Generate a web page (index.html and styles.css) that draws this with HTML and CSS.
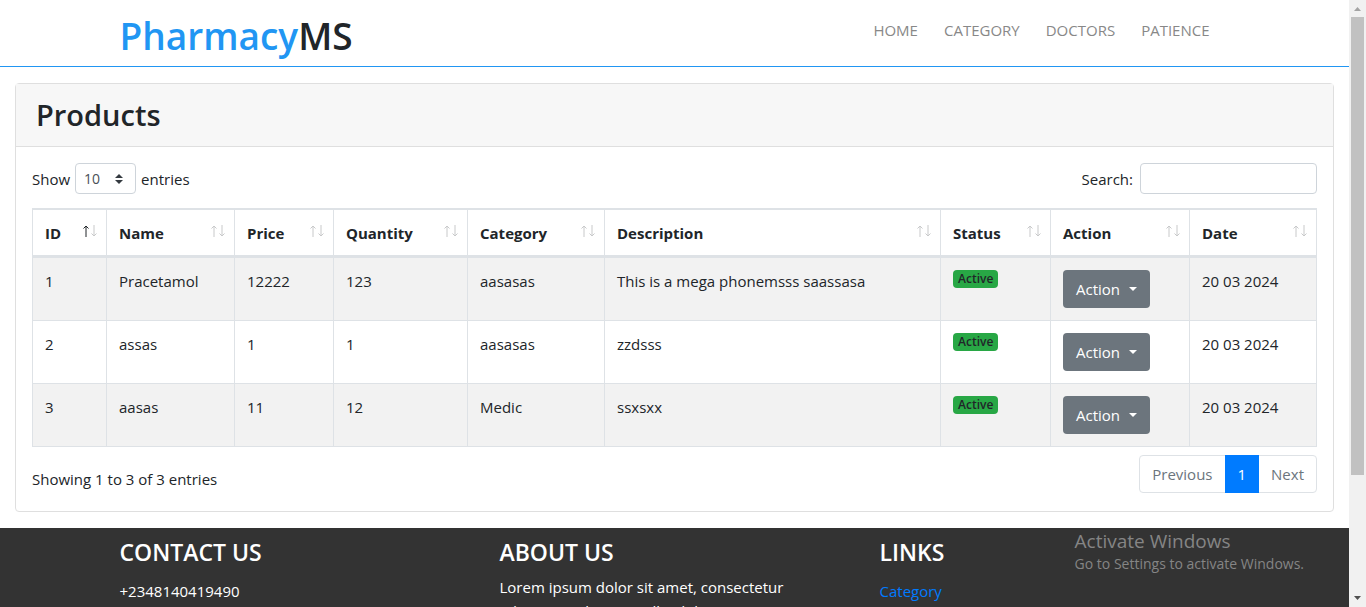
FILE: index.html
```html
<!DOCTYPE html>
<html lang="en">
<head>
<meta charset="utf-8">
<title>PharmacyMS</title>
<link rel="stylesheet" href="styles.css">
</head>
<body>
<svg class="sprite" aria-hidden="true">
  <symbol id="up" viewBox="0 0 6 12"><path d="M3 12V1M.5 3.500L3 1l2.500 2.500" fill="none" stroke="currentColor"/></symbol>
  <symbol id="down" viewBox="0 0 6 12"><path d="M3 0v11M.5 8.500L3 11l2.500-2.500" fill="none" stroke="currentColor"/></symbol>
</svg>
<div class="page">
  <header class="topbar">
    <div class="container topbar-row">
      <h1 class="brand"><span class="brand-accent">Pharmacy</span>MS</h1>
      <nav class="nav">
        <a href="#">HOME</a>
        <a href="#">CATEGORY</a>
        <a href="#">DOCTORS</a>
        <a href="#">PATIENCE</a>
      </nav>
    </div>
  </header>
  <main class="card">
    <div class="card-header"><h2 class="card-title">Products</h2></div>
    <div class="card-body">
      <div class="tools">
        <label class="field">Show
          <select class="length"><option>10</option><option>25</option><option>50</option></select>
          entries</label>
        <label class="field search-field">Search: <input class="search" type="search"></label>
      </div>
      <table class="table">
        <colgroup>
          <col class="c-id"><col class="c-name"><col class="c-price"><col class="c-qty"><col class="c-cat"><col><col class="c-status"><col class="c-action"><col class="c-date">
        </colgroup>
        <thead>
          <tr>
            <th><div class="th">ID<span class="sort"><svg class="on"><use href="#up"/></svg><svg><use href="#down"/></svg></span></div></th>
            <th><div class="th">Name<span class="sort"><svg><use href="#up"/></svg><svg><use href="#down"/></svg></span></div></th>
            <th><div class="th">Price<span class="sort"><svg><use href="#up"/></svg><svg><use href="#down"/></svg></span></div></th>
            <th><div class="th">Quantity<span class="sort"><svg><use href="#up"/></svg><svg><use href="#down"/></svg></span></div></th>
            <th><div class="th">Category<span class="sort"><svg><use href="#up"/></svg><svg><use href="#down"/></svg></span></div></th>
            <th><div class="th">Description<span class="sort"><svg><use href="#up"/></svg><svg><use href="#down"/></svg></span></div></th>
            <th><div class="th">Status<span class="sort"><svg><use href="#up"/></svg><svg><use href="#down"/></svg></span></div></th>
            <th><div class="th">Action<span class="sort"><svg><use href="#up"/></svg><svg><use href="#down"/></svg></span></div></th>
            <th><div class="th">Date<span class="sort"><svg><use href="#up"/></svg><svg><use href="#down"/></svg></span></div></th>
          </tr>
        </thead>
        <tbody>
          <tr><td>1</td><td>Pracetamol</td><td>12222</td><td>123</td><td>aasasas</td><td>This is a mega phonemsss saassasa</td><td><span class="badge">Active</span></td><td><button class="btn" type="button">Action</button></td><td>20 03 2024</td></tr>
          <tr><td>2</td><td>assas</td><td>1</td><td>1</td><td>aasasas</td><td>zzdsss</td><td><span class="badge">Active</span></td><td><button class="btn" type="button">Action</button></td><td>20 03 2024</td></tr>
          <tr><td>3</td><td>aasas</td><td>11</td><td>12</td><td>Medic</td><td>ssxsxx</td><td><span class="badge">Active</span></td><td><button class="btn" type="button">Action</button></td><td>20 03 2024</td></tr>
        </tbody>
      </table>
      <div class="table-foot">
        <p class="info">Showing 1 to 3 of 3 entries</p>
        <nav class="pager" aria-label="Table pages">
          <a href="#">Previous</a><a class="active" href="#">1</a><a href="#">Next</a>
        </nav>
      </div>
    </div>
  </main>
  <footer class="footer">
    <div class="container footer-grid">
      <section><h3 class="footer-title">CONTACT US</h3><p class="footer-line">+2348140419490</p></section>
      <section><h3 class="footer-title">ABOUT US</h3><p class="about">Lorem ipsum dolor sit amet, consectetur<br>adipisicing elit. Aut nulla, dolore in</p></section>
      <section><h3 class="footer-title">LINKS</h3><p class="footer-line"><a href="#">Category</a></p></section>
    </div>
  </footer>
</div>
<div class="scrollbar" aria-hidden="true">
  <svg class="arrow" viewBox="0 0 17 17"><path d="M5 11h7L8.500 7z" fill="#a3a3a3"/></svg>
  <div class="track"><div class="thumb"></div></div>
  <svg class="arrow" viewBox="0 0 17 17"><path d="M5 6h7L8.500 10z" fill="#505050"/></svg>
</div>
<aside class="watermark">
  <p class="watermark-title">Activate Windows</p>
  <p class="watermark-text">Go to Settings to activate Windows.</p>
</aside>
</body>
</html>
```
FILE: styles.css
```css
* { box-sizing: border-box; }
body {
  margin: 0;
  height: 100vh;
  display: flex;
  overflow: hidden;
  background: #fff;
  color: #212529;
  font: 15px/24px "Open Sans", "Noto Sans", sans-serif;
}
h1, h2, h3, p { margin: 0; }
a { color: #007bff; text-decoration: none; }
.sprite { position: absolute; width: 0; height: 0; }
.page { flex: 1; min-width: 0; overflow: hidden; }
.container { max-width: 1140px; margin: 0 auto; padding: 0 15px; }

.topbar { border-bottom: 1px solid #2196f3; }
.topbar-row { display: flex; justify-content: space-between; align-items: flex-start; height: 66px; padding-top: 12px; }
.brand { font-size: 37px; line-height: 48px; font-weight: 600; }
.brand-accent { color: #2196f3; }
.nav { display: flex; gap: 26px; padding: 6px 20px 0 0; }
.nav a { color: #888; }

.card { margin: 16px 15px; border: 1px solid #dfdfdf; border-radius: 4px; }
.card-header { padding: 12px 20px; background: #f7f7f7; border-bottom: 1px solid #dfdfdf; }
.card-title { font-size: 29px; line-height: 38px; font-weight: 600; }
.card-body { padding: 16px 16px 18px; }
.tools { display: flex; justify-content: space-between; margin-bottom: 14px; }
.field { display: flex; align-items: center; gap: 5px; line-height: 22px; }
.search-field { gap: 7px; }
.length {
  appearance: none;
  width: 61px;
  height: 31px;
  padding: 0 8px;
  border: 1px solid #ced4da;
  border-radius: 4px;
  color: #495057;
  font: 14px/20px "Open Sans", sans-serif;
  background: #fff url("data:image/svg+xml,%3csvg xmlns='http://www.w3.org/2000/svg' viewBox='0 0 4 5'%3e%3cpath fill='%23343a40' d='M2 0L0 2h4zm0 5L0 3h4z'/%3e%3c/svg%3e") no-repeat right 12px center / 8px 10px;
}
.search { width: 177px; height: 31px; border: 1px solid #ced4da; border-radius: 4px; padding: 4px 8px; font: inherit; }

.table { width: 100%; table-layout: fixed; border-collapse: separate; border-spacing: 0; border: 1px solid #dee2e6; border-right: 0; }
.c-id { width: 74px; }
.c-name { width: 128px; }
.c-price { width: 99px; }
.c-qty { width: 134px; }
.c-cat { width: 137px; }
.c-status { width: 110px; }
.c-action { width: 139px; }
.c-date { width: 127px; }
th, td { text-align: left; vertical-align: top; border: 0 solid #dee2e6; border-top-width: 1px; border-right-width: 1px; }
th { padding: 11px 9px 10px 12px; border-bottom-width: 2px; font-weight: 700; }
td { height: 63px; padding: 12px; line-height: 22px; }
.th { display: flex; justify-content: space-between; }
.sort { display: flex; gap: 2px; padding-top: 4px; color: #c8c9ca; }
.sort svg { width: 6px; height: 12px; }
.sort .on { color: #212529; }
tbody tr:nth-child(odd) { background: #f2f2f2; }
.badge { display: block; width: fit-content; padding: 3px 5px; border-radius: 4px; background: #28a745; font-size: 12px; line-height: 12px; font-weight: 600; }
.btn { display: flex; align-items: center; gap: 9px; height: 38px; padding: 0 13px; border: 0; border-radius: 4px; background: #6c757d; color: #fff; font: inherit; }
.btn::after { content: ""; border: 4px solid transparent; border-top-color: #fff; border-bottom: 0; }

.table-foot { display: flex; justify-content: space-between; padding-top: 8px; }
.info { padding-top: 12px; }
.pager { display: flex; height: 38px; border: 1px solid #dee2e6; border-radius: 4px; }
.pager a { padding: 6px 12px; color: #6c757d; }
.pager .active { margin: -1px 0; padding: 7px 13px; background: #007bff; color: #fff; }

.footer { background: #333; color: #fff; padding: 9px 0; }
.footer-grid { display: grid; grid-template-columns: repeat(3, 1fr); column-gap: 30px; }
.footer-title { font-size: 23px; line-height: 30px; font-weight: 600; }
.footer-line { padding-top: 12px; }
.about { padding-top: 8px; }

.scrollbar { display: flex; flex-direction: column; width: 17px; background: #f1f1f1; }
.arrow { width: 17px; height: 17px; }
.track { flex: 1; padding: 0 2px; }
.thumb { height: 80%; background: #c1c1c1; }

.watermark { position: absolute; right: 62px; bottom: 33px; color: #858585; font-size: 14px; line-height: 21px; }
.watermark-title { font-size: 19px; line-height: 24px; }
```
